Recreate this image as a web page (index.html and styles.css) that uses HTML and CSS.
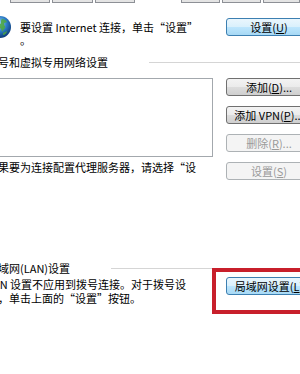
FILE: index.html
```html
<!DOCTYPE html>
<html>
<head>
<meta charset="UTF-8">
<title>Internet 选项 - 连接</title>
<link rel="stylesheet" href="styles.css">
</head>
<body>
	<div class="tabs">
		<div class="tab w43"></div>
		<div class="tab w44"></div>
		<div class="tab w43"></div>
		<div class="tab active"></div>
		<div class="tab w42"></div>
		<div class="tab w41"></div>
		<div class="tab w40"></div>
	</div>
	<div class="dialog">
		<div class="intro">
			<svg class="globe" width="24" height="24" viewBox="0 0 24 24">
				<defs>
					<radialGradient id="sea" cx="45%" cy="35%" r="65%">
						<stop offset="0" stop-color="#a6dcf8"/>
						<stop offset=".55" stop-color="#2c7cc6"/>
						<stop offset="1" stop-color="#0c3a78"/>
					</radialGradient>
				</defs>
				<circle cx="12" cy="12" r="11" fill="url(#sea)"/>
				<path d="M14 4c2 0 4 1 5 3-1 1-3 0-3 2s2 2 1 4c-1 1-2 3-3 4 0-2-1-3-2-4s-2-3 0-4 0-3 2-5z" fill="#4ea83c" opacity=".85"/>
				<path d="M15 18c1-1 3-1 4-2 0 2-2 4-4 4z" fill="#4ea83c" opacity=".8"/>
			</svg>
			<div class="intro-text">要设置 Internet 连接，单击“设置”<br>。</div>
			<a class="btn blue">设置(<u>U</u>)</a>
		</div>

		<div class="head">拨号和虚拟专用网络设置</div>

		<div class="vpn">
			<div class="vpn-left">
				<div class="list"></div>
				<div class="note">如果要为连接配置代理服务器，请选择“设</div>
			</div>
			<div class="btn-col">
				<a class="btn">添加(<u>D</u>)...</a>
				<a class="btn">添加 VPN(<u>P</u>)...</a>
				<a class="btn disabled">删除(<u>R</u>)...</a>
				<a class="btn disabled">设置(<u>S</u>)</a>
			</div>
		</div>

		<div class="head lan-head">局域网(LAN)设置</div>

		<div class="lan">
			<div class="lan-text">LAN 设置不应用到拨号连接。对于拨号设<br>置，单击上面的“设置”按钮。</div>
			<div class="lan-btn">
				<a class="btn blue">局域网设置(<u>L</u>)</a>
				<div class="mark"></div>
			</div>
		</div>
	</div>
</body>
</html>
```

FILE: styles.css
```css
body {
	margin: 0;
	width: 300px;
	height: 374px;
	overflow: hidden;
	background: #fff;
	color: #000;
	font-family: "Noto Sans CJK SC", sans-serif;
	font-size: 11px;
}
.tabs {
	display: flex;
	gap: 2px;
	height: 3px;
	padding-left: 10px;
}
.tab {
	box-sizing: border-box;
	height: 3px;
	border: 1px solid #8d9096;
	border-top: none;
	background: #e4e4e4;
}
.tab.active {
	width: 45px;
	visibility: hidden;
}
.w40 { width: 40px; }
.w41 { width: 41px; }
.w42 { width: 42px; }
.w43 { width: 43px; }
.w44 { width: 44px; }

.dialog {
	margin-left: -13px;
	width: 325px;
}
.intro {
	display: flex;
	align-items: flex-start;
	margin-top: 15px;
}
.globe {
	margin-left: 1px;
	margin-top: -3px;
	flex: none;
}
.intro-text {
	flex: 1;
	margin-left: 8px;
	padding-top: 3px;
	line-height: 13px;
	white-space: nowrap;
}

.btn {
	box-sizing: border-box;
	display: flex;
	align-items: center;
	justify-content: center;
	width: 86px;
	height: 18px;
	border: 1px solid #707070;
	border-radius: 3px;
	background: linear-gradient(#f3f3f3, #ebebeb 50%, #dddddd 50%, #cfcfcf);
	white-space: nowrap;
	line-height: 14px;
	cursor: pointer;
	flex: none;
}
.btn u {
	text-decoration-thickness: 1px;
	text-underline-offset: 1px;
}
.btn.blue {
	border-color: #3c7fb1;
	background: linear-gradient(#eaf6fd, #d9f0fc 50%, #bee6fd 50%, #a7d9f5);
}
.btn.disabled {
	border-color: #adb2b5;
	background: #f4f4f4;
	color: #9a9a9a;
}

.head {
	display: flex;
	align-items: center;
	margin-top: 8px;
	line-height: 14px;
}
.head::after {
	content: "";
	flex: 1;
	margin-left: 41px;
	border-top: 1px solid #d5d5d5;
}

.vpn {
	display: flex;
	margin-top: 9px;
}
.vpn-left {
	width: 226px;
}
.list {
	box-sizing: border-box;
	height: 79px;
	margin-left: 8px;
	border: 1px solid #a3a8ad;
	background: #fff;
}
.note {
	margin-top: 3px;
	line-height: 14px;
	white-space: nowrap;
}
.btn-col {
	display: flex;
	flex-direction: column;
	gap: 10px;
	margin-left: auto;
}

.lan-head {
	margin-top: 81px;
}
.lan {
	display: flex;
	margin-top: 2px;
}
.lan-text {
	line-height: 14px;
	white-space: nowrap;
}
.lan-btn {
	position: relative;
	margin-left: auto;
}
.mark {
	position: absolute;
	top: -9px;
	left: -14px;
	right: -10px;
	bottom: -9px;
	border: 4px solid #c81f2b;
}
```
